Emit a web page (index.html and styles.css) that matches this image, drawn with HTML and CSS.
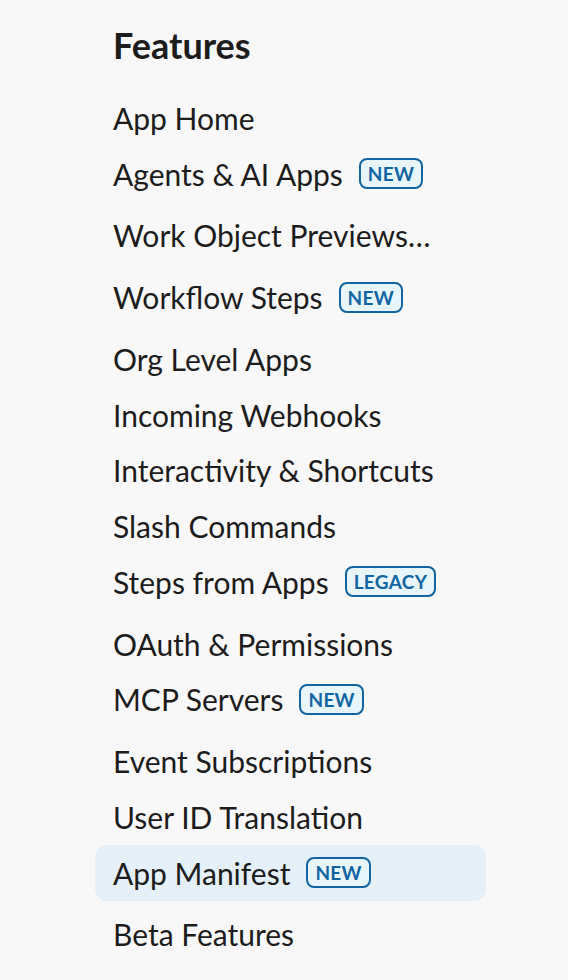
FILE: index.html
```html
<!DOCTYPE html>
<html lang="en">
  <head>
    <meta charset="UTF-8" />
    <meta name="viewport" content="width=device-width, initial-scale=1.0" />
    <title>Features</title>
    <link rel="stylesheet" href="styles.css">
  </head>

  <body>
    <nav class="sidebar">
      <h2 class="sidebar-title">Features</h2>
      <ul class="nav-list">
        <li><a class="nav-item" href="#">App Home</a></li>
        <li class="spaced"><a class="nav-item" href="#">Agents &amp; AI Apps <span class="badge">NEW</span></a></li>
        <li class="spaced"><a class="nav-item" href="#">Work Object Previews…</a></li>
        <li class="spaced"><a class="nav-item" href="#">Workflow Steps <span class="badge">NEW</span></a></li>
        <li><a class="nav-item" href="#">Org Level Apps</a></li>
        <li><a class="nav-item" href="#">Incoming Webhooks</a></li>
        <li><a class="nav-item" href="#">Interactivity &amp; Shortcuts</a></li>
        <li><a class="nav-item" href="#">Slash Commands</a></li>
        <li class="spaced"><a class="nav-item" href="#">Steps from Apps <span class="badge">LEGACY</span></a></li>
        <li><a class="nav-item" href="#">OAuth &amp; Permissions</a></li>
        <li class="spaced"><a class="nav-item" href="#">MCP Servers <span class="badge">NEW</span></a></li>
        <li><a class="nav-item" href="#">Event Subscriptions</a></li>
        <li><a class="nav-item" href="#">User ID Translation</a></li>
        <li class="spaced"><a class="nav-item active" href="#">App Manifest <span class="badge">NEW</span></a></li>
        <li><a class="nav-item" href="#">Beta Features</a></li>
      </ul>
    </nav>
  </body>
</html>
```

FILE: styles.css
```css
* {
  margin: 0;
  padding: 0;
  box-sizing: border-box;
}

body {
  background-color: #f8f8f8;
  font-family: Lato, "Noto Sans", sans-serif;
  color: #1d1c1d;
}

.sidebar {
  width: 391px;
  margin-left: 95px;
  padding-top: 24px;
}

.sidebar-title {
  font-size: 36px;
  font-weight: 700;
  line-height: 43px;
  padding-left: 18px;
  margin-bottom: 23px;
}

.nav-list {
  list-style: none;
}

.nav-list li.spaced {
  padding-bottom: 6px;
}

.nav-item {
  display: flex;
  align-items: center;
  column-gap: 16px;
  height: 55.75px;
  padding: 0 18px;
  border-radius: 12px;
  font-size: 30px;
  color: #1d1c1d;
  text-decoration: none;
  white-space: nowrap;
}

.nav-item.active {
  background-color: #e4eff7;
}

.badge {
  display: inline-flex;
  align-items: center;
  height: 31px;
  padding: 0 7px;
  border: 2px solid #1264a3;
  border-radius: 8px;
  background-color: #e8f5fa;
  color: #1264a3;
  font-size: 19px;
  font-weight: 700;
  letter-spacing: 0.3px;
}
```
